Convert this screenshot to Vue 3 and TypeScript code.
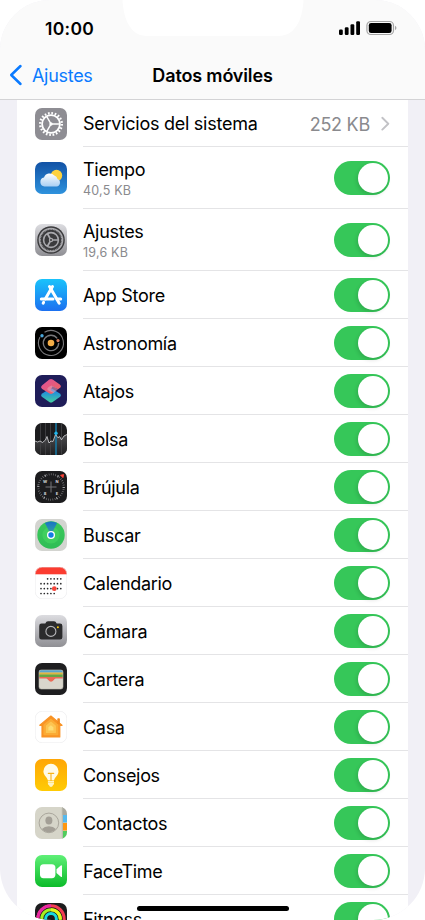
<template>
    <div class="screen">
        <header class="header">
            <div class="notch-wrap">
                <svg class="notch" width="190" height="37" viewBox="0 0 190 37">
                    <path d="M3.500 0 C4.500 20 12 36 28 36 H159 C176 36 183.500 20 184.500 0 Z" fill="#fff" />
                </svg>
            </div>
            <div class="status">
                <span class="time">10:00</span>
                <svg class="status-icons" width="60" height="16" viewBox="0 0 60 16">
                    <rect x="1" y="9.500" width="3.800" height="5.500" rx="1.200" />
                    <rect x="6.800" y="7.200" width="3.800" height="7.800" rx="1.200" />
                    <rect x="12.500" y="4.200" width="3.800" height="10.800" rx="1.200" />
                    <rect x="18.200" y="1.300" width="3.800" height="13.700" rx="1.200" />
                    <rect x="28.900" y="1.500" width="26.600" height="13" rx="4" fill="none" stroke="#a5a5a5" stroke-width="1.200" />
                    <rect x="30.800" y="3" width="22.800" height="10" rx="2.300" />
                    <path d="M57 5.800 q3 2.200 0 4.400 Z" fill="#a5a5a5" />
                </svg>
            </div>
            <nav class="nav">
                <div class="back">
                    <svg width="14" height="22" viewBox="0 0 14 22">
                        <path d="M11.500 2 L2.200 11 L11.500 20" fill="none" stroke="#0a7aff" stroke-width="2.500" stroke-linecap="round" stroke-linejoin="round" />
                    </svg>
                    <span>Ajustes</span>
                </div>
                <h1 class="title">Datos móviles</h1>
            </nav>
        </header>

        <main class="list">
            <div v-for="row in rows" :key="row.icon" class="row" :class="{ tall: row.usage }">
                <svg class="icon" width="32" height="32" viewBox="0 0 32 32">
                    <g clip-path="url(#tile)">
                        <template v-if="row.icon === 'system'">
                            <rect width="32" height="32" fill="#8e8d93" />
                            <g fill="none" stroke="#fff">
                                <circle cx="16" cy="16" r="10.800" stroke-width="2.400" stroke-dasharray="1.700 1.693" />
                                <circle cx="16" cy="16" r="8.900" stroke-width="1.800" />
                                <path d="M16 16 H25 M16 16 L11.500 8.200 M16 16 L11.500 23.800" stroke-width="1.500" />
                            </g>
                            <circle cx="16" cy="16" r="1.700" fill="#fff" />
                        </template>

                        <template v-else-if="row.icon === 'weather'">
                            <rect width="32" height="32" fill="url(#sky)" />
                            <circle cx="21.500" cy="13.500" r="5.700" fill="#fdd23f" />
                            <path d="M9.500 24.500 A4.500 4.500 0 0 1 9 15.600 A6 6 0 0 1 19.300 13.600 A4.500 4.500 0 0 1 22.500 17 A3.900 3.900 0 0 1 21.500 24.500 Z" fill="url(#cloud)" />
                        </template>

                        <template v-else-if="row.icon === 'settings'">
                            <rect width="32" height="32" fill="url(#silver)" />
                            <circle cx="16" cy="16" r="13.800" fill="#3b3b3d" />
                            <g fill="none" stroke="#a9a9ad">
                                <circle cx="16" cy="16" r="11.600" stroke-width="1.500" />
                                <circle cx="16" cy="16" r="10.700" stroke-width="1.200" stroke-dasharray=".9 .78" />
                                <circle cx="16" cy="16" r="7.400" stroke-width="1.600" />
                                <path d="M16 16 H23 M16 16 L12.300 9.500 M16 16 L12.300 22.500" stroke-width="1.700" />
                            </g>
                            <circle cx="16" cy="16" r="2.200" fill="#a9a9ad" />
                            <circle cx="16" cy="16" r="1" fill="#3b3b3d" />
                        </template>

                        <template v-else-if="row.icon === 'appstore'">
                            <rect width="32" height="32" fill="url(#store)" />
                            <g fill="none" stroke="#fff" stroke-width="3" stroke-linecap="round">
                                <path d="M17.500 7.500 L10.300 20" />
                                <path d="M14.500 7.500 L24.200 24.200" />
                                <path d="M6.300 20 H18" />
                                <path d="M22 20 H25.700" />
                                <path d="M8.600 23.400 L8.200 24.200" />
                            </g>
                        </template>

                        <template v-else-if="row.icon === 'astronomy'">
                            <rect width="32" height="32" fill="#000" />
                            <g fill="none" stroke="#77777a">
                                <path d="M9.500 5.300 A12.500 12.500 0 1 1 5 10" stroke-width="1.100" />
                                <path d="M22.200 11.400 A7.700 7.700 0 1 0 23.700 16" stroke-width="1.300" />
                            </g>
                            <circle cx="16" cy="16" r="3.300" fill="#f5ae48" />
                            <circle cx="7" cy="8.700" r="1.700" fill="#4aa7dc" />
                            <circle cx="23" cy="13.600" r="1.600" fill="#d27a5c" />
                        </template>

                        <template v-else-if="row.icon === 'shortcuts'">
                            <rect width="32" height="32" fill="#1f1d59" />
                            <path d="M14.400 13.900 Q16 13 17.600 13.900 L24.800 18.500 Q27 20.300 24.800 22 L17.700 27 Q16 28 14.300 27 L7.200 22 Q5 20.300 7.200 18.500 Z" fill="url(#teal)" />
                            <path d="M14.300 4.600 Q16 3.600 17.700 4.600 L24.800 9.500 Q27 11.300 24.800 13 L23 14.200 L17.500 11.500 L15.500 15 L19 17.600 L17.500 18.600 Q16 19.500 14.500 18.600 L7.200 14 Q5 12.200 7.200 10.300 Z" fill="url(#pink)" />
                            <path d="M23 14.200 L16.500 10.500 Q10.500 13 13 15.500 L18.500 17.900 Z" fill="#e59cb8" opacity=".6" />
                        </template>

                        <template v-else-if="row.icon === 'stocks'">
                            <rect width="32" height="32" fill="#1c1c1e" />
                            <path d="M0 18 L3 19 L6 18 L8 19.500 L11 16.500 L12 13.500 L14 20 L16 18 L18 18.500 L21 11.500 L23 14.500 L25 13.500 L27 16.500 L29 13 L32 11.500 V32 H0 Z" fill="url(#chart)" />
                            <path d="M5.500 0 V32 M10.500 0 V32 M15.500 0 V32 M26.500 0 V32" stroke="#454548" stroke-width=".8" />
                            <path d="M21 0 V32" stroke="#167ba8" stroke-width="1.500" />
                            <path d="M0 18 L2.500 19 L5 18 L7.500 19.500 L10.500 17 L12 13.500 L14 20 L16 18 L18 18.500 L20.500 11.500 L23 14.800 L24.500 13.500 L26.500 16.800 L29 13 L32 11.500" fill="none" stroke="#d8d8da" stroke-width=".8" />
                            <circle cx="21" cy="10.300" r="1.700" fill="#21b5ea" />
                        </template>

                        <template v-else-if="row.icon === 'compass'">
                            <rect width="32" height="32" fill="#1c1c1e" />
                            <circle cx="16" cy="16" r="12.700" fill="none" stroke="#828286" stroke-width="2" stroke-dasharray=".6 1.600" />
                            <circle cx="16" cy="16" r="12.700" fill="none" stroke="#b2b2b5" stroke-width="2.200" stroke-dasharray=".9 12.400" />
                            <path d="M16 10.500 V21.500 M10.500 16 H21.500" stroke="#77777b" stroke-width="1" />
                            <path d="M25.500 4.200 L28.700 3.500 L28 6.700 Z" fill="#ff453a" stroke="#ff453a" stroke-width=".8" />
                            <g class="cardinals">
                                <text x="10" y="11.700">W</text>
                                <text x="22" y="11.700">N</text>
                                <text x="10" y="24">S</text>
                                <text x="22" y="24">E</text>
                            </g>
                        </template>

                        <template v-else-if="row.icon === 'find'">
                            <rect width="32" height="32" fill="#d3d4d0" />
                            <circle cx="16" cy="16" r="13.700" fill="url(#radar)" />
                            <circle cx="16" cy="16" r="8.600" fill="#49d964" opacity=".55" />
                            <path d="M16 16 L9.900 4 A13.600 13.600 0 0 1 22.100 4 Z" fill="url(#beam)" />
                            <circle cx="16" cy="16" r="4" fill="#fff" />
                            <circle cx="16" cy="16" r="2.700" fill="#147ce5" />
                        </template>

                        <template v-else-if="row.icon === 'calendar'">
                            <rect width="32" height="32" fill="#fff" />
                            <rect width="32" height="7.300" fill="#fb3c30" />
                            <circle v-for="(dot, i) in calendarDots" :key="i" :cx="dot.x" :cy="dot.y" r=".85" fill="#29292b" />
                            <circle cx="19.300" cy="21.700" r="2.400" fill="#f6453a" />
                        </template>

                        <template v-else-if="row.icon === 'camera'">
                            <rect width="32" height="32" fill="url(#silver)" />
                            <path d="M4.200 11 Q4.200 8.600 6.600 8.600 H10.300 Q11.200 6.200 13 6.200 H19 Q20.800 6.200 21.700 8.600 H25 Q27.400 8.600 27.400 11 V22.200 Q27.400 24.600 25 24.600 H6.600 Q4.200 24.600 4.200 22.200 Z" fill="#2b2b2c" />
                            <circle cx="15.900" cy="16.400" r="5" fill="none" stroke="#b5b5b8" stroke-width="1.100" />
                            <circle cx="22.900" cy="12.300" r="1" fill="#ffcc0a" />
                        </template>

                        <template v-else-if="row.icon === 'wallet'">
                            <rect width="32" height="32" fill="#1e1e20" />
                            <g clip-path="url(#pocket)">
                                <rect x="4" y="7" width="24" height="19" fill="#d9d6cc" />
                                <rect x="4" y="7" width="24" height="2.600" fill="#58a5cf" />
                                <rect x="4" y="9.500" width="24" height="2.300" fill="#e0b440" />
                                <rect x="4" y="11.500" width="24" height="2.600" fill="#64a646" />
                                <path d="M4 13.900 H28 V15.600 H20.700 Q19.600 15.700 18.800 17 Q16 20.300 13.200 17 Q12.400 15.700 11.300 15.600 H4 Z" fill="#ea6b57" />
                            </g>
                            <rect x="4" y="7" width="24" height="19" rx="2.200" fill="none" stroke="#bdbcb4" stroke-width=".6" />
                        </template>

                        <template v-else-if="row.icon === 'home'">
                            <rect width="32" height="32" fill="#fff" />
                            <path d="M15.900 5 L27 14.300 H24.800 V26 H7 V14.300 H4.800 Z" fill="#f99324" stroke="#f99324" stroke-width="1.200" stroke-linejoin="round" />
                            <rect x="22.300" y="7.200" width="2.600" height="6" rx=".8" fill="#f28b1d" />
                            <path d="M15.900 8.500 L22.600 14 V23.500 H9.200 V14 Z" fill="#fbab35" stroke="#fbab35" stroke-width="1.500" stroke-linejoin="round" />
                            <path d="M15.900 11.300 L20.300 15 V21.500 H11.500 V15 Z" fill="#fdc451" stroke="#fdc451" stroke-width="1.200" stroke-linejoin="round" />
                            <path d="M15.900 14.300 L18.400 16.300 V19.600 H13.400 V16.300 Z" fill="#fedc73" />
                        </template>

                        <template v-else-if="row.icon === 'tips'">
                            <rect width="32" height="32" fill="url(#amber)" />
                            <path d="M12.800 21.200 C12.500 18.500 8.400 16.700 8.400 12.300 A7.500 7.500 0 0 1 23.500 12.300 C23.500 16.700 19.400 18.500 19.100 21.200 Z" fill="#fffbe8" />
                            <path d="M12.900 21.800 H19 V25 Q18.500 25.800 18 26.200 Q17.500 27.900 16 27.900 T14 26.200 Q13.300 25.800 12.900 25 Z" fill="#fff3c4" />
                            <path d="M13.300 14.400 H18.700 M16 14.400 V21.500" fill="none" stroke="#f7b41b" stroke-width="1.100" stroke-linecap="round" />
                            <path d="M13 23.500 H19" stroke="#ffd043" stroke-width=".5" />
                        </template>

                        <template v-else-if="row.icon === 'contacts'">
                            <rect width="32" height="32" fill="#d6d5c9" />
                            <rect x="27" width="5" height="8" fill="#aaa99e" />
                            <rect x="27.800" y="8" width="4.200" height="7.500" fill="#56b9ed" />
                            <rect x="27.800" y="16" width="4.200" height="7.500" fill="#ff970f" />
                            <rect x="27.800" y="24" width="4.200" height="8" fill="#4fcc5d" />
                            <rect x="26.800" width="1" height="32" fill="#b9b8ac" />
                            <circle cx="13.900" cy="15.900" r="9.800" fill="none" stroke="#a5a197" stroke-width=".9" />
                            <ellipse cx="13.900" cy="13.500" rx="3.500" ry="4" fill="#a39f96" />
                            <path d="M6.900 22 Q9.500 19.200 13.900 19.200 T20.900 22 A9.300 9.300 0 0 1 6.900 22 Z" fill="#a39f96" />
                        </template>

                        <template v-else-if="row.icon === 'facetime'">
                            <rect width="32" height="32" fill="url(#green)" />
                            <rect x="5" y="9.200" width="15.400" height="14" rx="3.600" fill="#fff" />
                            <path d="M21.500 14.300 L25.800 10.600 Q27 9.900 27 11.200 V21.200 Q27 22.500 25.800 21.800 L21.500 18.100 Z" fill="#fff" />
                        </template>

                        <template v-else>
                            <rect width="32" height="32" fill="#1c1c1e" />
                            <g fill="none" stroke-width="3">
                                <circle cx="16" cy="16" r="13.200" stroke="#f33c51" />
                                <path d="M16 2.800 A13.200 13.200 0 0 0 2.800 16" stroke="#e829a3" />
                                <circle cx="16" cy="16" r="9.300" stroke="#a8ef21" />
                                <path d="M16 6.700 A9.300 9.300 0 0 1 25.300 16" stroke="#e2f61c" />
                                <circle cx="16" cy="16" r="5.400" stroke="#19d9df" />
                            </g>
                        </template>
                    </g>
                    <rect v-if="row.icon === 'calendar' || row.icon === 'home'" x=".25" y=".25" width="31.500" height="31.500" rx="7" fill="none" stroke="#e4e4e6" stroke-width=".5" />
                </svg>

                <div class="body">
                    <div class="label">
                        <span class="name" :class="{ wide: row.icon === 'system' }">{{ row.name }}</span>
                        <span v-if="row.usage" class="usage">{{ row.usage }}</span>
                    </div>
                    <template v-if="row.total">
                        <span class="total">{{ row.total }}</span>
                        <svg class="chevron" width="9" height="15" viewBox="0 0 9 15">
                            <path d="M1.300 1.800 L7.300 7.700 L1.300 13.600" fill="none" stroke="#c2c2c6" stroke-width="1.900" stroke-linecap="round" stroke-linejoin="round" />
                        </svg>
                    </template>
                    <span v-else class="toggle"><span class="knob"></span></span>
                </div>
            </div>
        </main>

        <div class="home-bar"></div>

        <!-- shared clips and gradients -->
        <svg class="defs" width="0" height="0">
            <defs>
                <clipPath id="tile"><rect width="32" height="32" rx="7" /></clipPath>
                <clipPath id="pocket"><rect x="4" y="7" width="24" height="19" rx="2.200" /></clipPath>
                <linearGradient v-for="g in gradients" :id="g.id" :key="g.id" x1="0" y1="0" :x2="g.diagonal ? 1 : 0" y2="1">
                    <stop offset="0" :stop-color="g.from" />
                    <stop offset="1" :stop-color="g.to" />
                </linearGradient>
            </defs>
        </svg>
    </div>
</template>

<script setup lang="ts">
interface Row {
    icon: string
    name: string
    usage?: string
    total?: string
}

interface Gradient {
    id: string
    from: string
    to: string
    diagonal?: boolean
}

const rows: Row[] = [
    { icon: 'system', name: 'Servicios del sistema', total: '252 KB' },
    { icon: 'weather', name: 'Tiempo', usage: '40,5 KB' },
    { icon: 'settings', name: 'Ajustes', usage: '19,6 KB' },
    { icon: 'appstore', name: 'App Store' },
    { icon: 'astronomy', name: 'Astronomía' },
    { icon: 'shortcuts', name: 'Atajos' },
    { icon: 'stocks', name: 'Bolsa' },
    { icon: 'compass', name: 'Brújula' },
    { icon: 'find', name: 'Buscar' },
    { icon: 'calendar', name: 'Calendario' },
    { icon: 'camera', name: 'Cámara' },
    { icon: 'wallet', name: 'Cartera' },
    { icon: 'home', name: 'Casa' },
    { icon: 'tips', name: 'Consejos' },
    { icon: 'contacts', name: 'Contactos' },
    { icon: 'facetime', name: 'FaceTime' },
    { icon: 'fitness', name: 'Fitness' }
]

const gradients: Gradient[] = [
    { id: 'sky', from: '#1252a5', to: '#2e92dd' },
    { id: 'cloud', from: '#ffffff', to: '#a9cff3' },
    { id: 'silver', from: '#dcdce0', to: '#8f8f94' },
    { id: 'store', from: '#1ac3fb', to: '#1c70f0' },
    { id: 'teal', from: '#1679f0', to: '#45cfa0' },
    { id: 'pink', from: '#dd4f9c', to: '#f0665c', diagonal: true },
    { id: 'chart', from: '#4b4b4e', to: '#1f1f21' },
    { id: 'radar', from: '#3bc95c', to: '#2fbd55' },
    { id: 'beam', from: '#1873c5', to: '#38a5a0' },
    { id: 'amber', from: '#ffa606', to: '#ffcb05' },
    { id: 'green', from: '#5ff077', to: '#0cbb2a' }
]

// month grid: the first row starts late, the last one ends early
const calendarDots: { x: number, y: number }[] = []
for(let r = 0; r < 4; r++) {
    for(let c = 0; c < 7; c++) {
        if((r == 0 && c < 2) || (r == 3 && c > 4)) continue
        calendarDots.push({ x: 6 + c * 3.3, y: 11.8 + r * 4.9 })
    }
}
</script>

<style>
body {
    background: #fff;
}
</style>

<style scoped>
.screen {
    position: relative;
    width: 425px;
    height: 920px;
    overflow: hidden;
    border-radius: 50px 50px 52px 52px;
    background: #f1f0f6;
    color: #000;
    font-family: Inter, "Liberation Sans", sans-serif;
}
.header {
    position: relative;
    box-sizing: border-box;
    height: 100px;
    background: #fafafa;
    border-bottom: 1px solid #d3d3d5;
}
.notch-wrap {
    position: absolute;
    left: 119px;
    top: 0;
}
.notch {
    display: block;
}
.status {
    display: flex;
    justify-content: space-between;
    align-items: center;
    height: 56px;
    padding: 0 27px 0 45px;
}
.time {
    font-size: 17.5px;
    font-weight: 600;
    letter-spacing: .3px;
}
.nav {
    display: grid;
    grid-template-columns: 1fr auto 1fr;
    align-items: center;
    height: 38px;
}
.back {
    display: flex;
    align-items: center;
    gap: 9px;
    padding-left: 9px;
    color: #0a7aff;
    font-size: 18px;
    letter-spacing: -.3px;
}
.title {
    margin: 0;
    font-size: 18px;
    font-weight: 600;
    letter-spacing: -.15px;
}
.list {
    margin: 0 17px;
    background: #fff;
}
.row {
    display: flex;
    align-items: center;
    height: 48px;
    padding-left: 18px;
}
.row:first-child {
    height: 47px;
}
.row.tall {
    height: 62px;
}
.icon {
    flex: none;
    margin-right: 16px;
}
.body {
    display: flex;
    flex: 1;
    align-items: center;
    box-sizing: border-box;
    height: 100%;
    padding-right: 18px;
    border-bottom: 1px solid #e4e4e6;
}
.label {
    display: flex;
    flex: 1;
    flex-direction: column;
    padding-top: 2px;
}
.name {
    font-size: 18px;
    line-height: 24px;
    letter-spacing: -.3px;
}
.name.wide {
    letter-spacing: -.26px;
}
.usage {
    color: #8a8a8e;
    font-size: 12.5px;
    line-height: 18px;
    letter-spacing: .2px;
}
.total {
    padding-top: 2px;
    color: #8a8a8e;
    font-size: 18px;
    letter-spacing: -.25px;
}
.chevron {
    margin-left: 11px;
}
.toggle {
    display: flex;
    justify-content: flex-end;
    box-sizing: border-box;
    width: 56px;
    height: 34px;
    padding: 2px;
    border-radius: 17px;
    background: #36c759;
}
.knob {
    width: 30px;
    height: 30px;
    border-radius: 50%;
    background: #fff;
    box-shadow: -1px 2px 4px rgba(0, 0, 0, .14);
}
.cardinals text {
    font-size: 4px;
    font-weight: 700;
    text-anchor: middle;
    fill: #dcdcde;
}
.home-bar {
    position: absolute;
    left: 137px;
    bottom: 9px;
    width: 152px;
    height: 5px;
    border-radius: 3px;
    background: #000;
}
.defs {
    position: absolute;
}
</style>
